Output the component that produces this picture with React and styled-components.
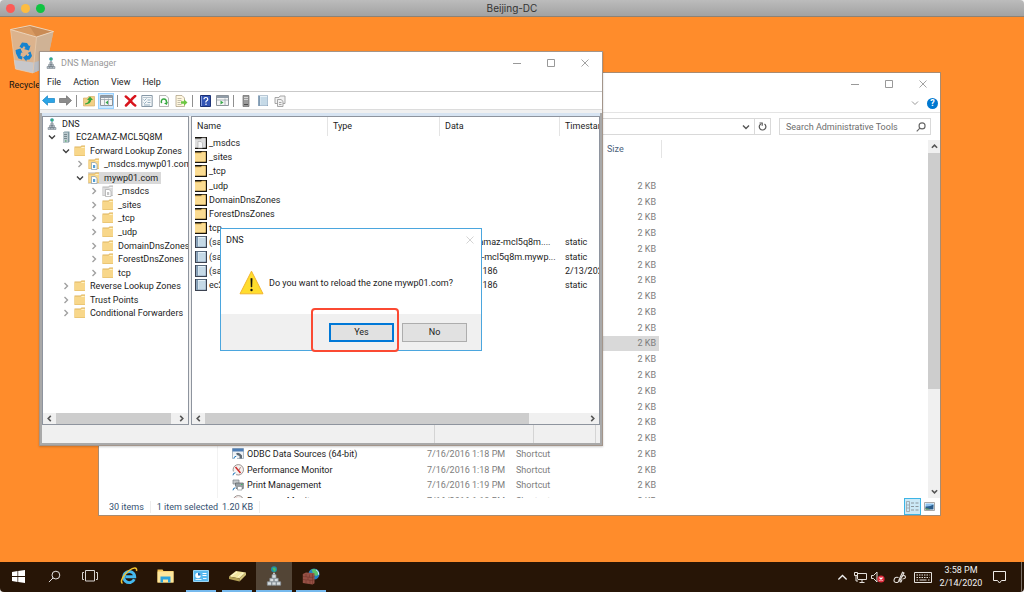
import React from 'react';
import styled, { createGlobalStyle } from 'styled-components';

const GlobalStyle = createGlobalStyle`
  * {
    box-sizing: border-box;
  }
  body {
    margin: 0;
    background: #f4f4f4;
  }
  button, input {
    font: inherit;
    color: inherit;
    padding: 0;
    margin: 0;
    border: 0;
    background: none;
  }
  svg {
    display: block;
    flex: none;
  }
`;

const Screen = styled.div`
  display: flex;
  flex-direction: column;
  height: 100vh;
  overflow: hidden;
  border-radius: 4px;
  font-family: Roboto, "Noto Sans", sans-serif;
  font-size: 9px;
  line-height: 12px;
  color: #1c1c1c;
  white-space: nowrap;
`;

const MacBar = styled.header`
  position: relative;
  display: flex;
  align-items: center;
  justify-content: center;
  height: 17px;
  border-bottom: 1px solid #8d8275;
  background: linear-gradient(#bcbcbc, #a2a2a2);
  font-family: Inter, sans-serif;
  font-size: 10px;
  color: #333;
`;

const Lights = styled.div`
  position: absolute;
  left: 6px;
  top: 4px;
  display: flex;
  gap: 6px;
`;

const Light = styled.button`
  width: 9px;
  height: 9px;
  border-radius: 50%;
  background: ${(props) => props.$color};
`;

const Desktop = styled.main`
  position: relative;
  flex: 1;
  background: #ff8c2b;
`;

const DesktopIcon = styled.div`
  position: absolute;
  left: 9px;
  top: 7px;
  display: flex;
  flex-direction: column;
  gap: 5px;
  color: #111;
`;

const TitleBar = styled.div`
  display: flex;
  align-items: center;
  height: 21px;
  padding-left: 5px;
  color: #999;
`;

const TitleText = styled.span`
  flex: 1;
  padding-left: 4px;
`;

const WindowButton = styled.button`
  display: flex;
  align-items: center;
  justify-content: center;
  width: 34px;
  height: 21px;
  color: #999;
`;

/* ---------- explorer window ---------- */

const ExplorerWindow = styled.section`
  position: absolute;
  left: 98px;
  right: 83px;
  top: 55px;
  bottom: 46px;
  display: flex;
  flex-direction: column;
  border: 1px solid #a98b70;
  background: #fff;
`;

const RibbonRow = styled.div`
  display: flex;
  align-items: center;
  justify-content: flex-end;
  gap: 8px;
  height: 19px;
  padding-right: 2px;
  border-bottom: 1px solid #e4e4e4;
  color: #999;
`;

const HelpButton = styled.button`
  width: 11px;
  height: 11px;
  border-radius: 50%;
  background: #0078d0;
  color: #fff;
  line-height: 11px;
  font-weight: 700;
`;

const AddressRow = styled.div`
  display: flex;
  gap: 8px;
  padding: 5px 9px 5px 120px;
`;

const AddressBox = styled.div`
  display: flex;
  flex: 1;
  height: 17px;
  border: 1px solid #d9d9d9;
`;

const AddressInput = styled.input`
  flex: 1;
  min-width: 0;
`;

const AddressButton = styled.button`
  display: flex;
  align-items: center;
  justify-content: center;
  width: 16px;
  color: #555;
  border-left: ${(props) => (props.$divided ? '1px solid #d9d9d9' : '0')};
`;

const SearchBox = styled.label`
  display: flex;
  align-items: center;
  width: 152px;
  height: 17px;
  padding: 0 4px 0 6px;
  border: 1px solid #d9d9d9;
  color: #666;
`;

const SearchInput = styled.input`
  flex: 1;
  min-width: 0;
  outline: 0;
  &::placeholder {
    color: #6d6d6d;
    opacity: 1;
  }
`;

const ExplorerBody = styled.div`
  display: flex;
  flex: 1;
  min-height: 0;
`;

const NavPane = styled.nav`
  width: 119px;
  border-right: 1px solid #f2f2f2;
`;

const FilePane = styled.div`
  flex: 1;
  overflow: hidden;
`;

const FileTable = styled.table`
  display: block;
  width: 441px;
  color: #7d7d7d;
  thead {
    display: block;
    padding-bottom: 20px;
  }
  tbody {
    display: grid;
    grid-template-rows: repeat(21, 1fr);
    height: 331px;
  }
  tr {
    display: grid;
    grid-template-columns: 209px 89px 91px 52px;
    align-items: center;
  }
  th {
    height: 18px;
    padding: 0;
    text-align: left;
    font-weight: 400;
    line-height: 18px;
    color: #4c607a;
  }
  th:last-child {
    width: 55px;
    border-right: 1px solid #e4e4e4;
  }
  td {
    padding: 0;
  }
  td:last-child {
    padding-right: 3px;
    text-align: right;
  }
`;

const FileRow = styled.tr`
  background: ${(props) => (props.$selected ? '#d9d9d9' : 'none')};
`;

const FileName = styled.div`
  display: flex;
  align-items: center;
  gap: 3px;
  padding-left: 14px;
  color: #1c1c1c;
`;

const ExplorerStatus = styled.footer`
  display: flex;
  align-items: center;
  height: 17px;
  padding: 0 2px 0 10px;
  color: #34506f;
`;

const StatusItem = styled.span`
  display: flex;
  gap: 4px;
  padding-right: 6px;
  margin-right: 6px;
  border-right: 1px solid #ededed;
`;

const ViewButton = styled.button`
  display: flex;
  align-items: center;
  justify-content: center;
  width: 17px;
  height: 17px;
  border: 1px solid ${(props) => (props.$active ? '#3db5e6' : 'transparent')};
  background: ${(props) => (props.$active ? '#cbe8f6' : 'none')};
`;

const Spacer = styled.span`
  flex: 1;
`;

/* ---------- scroll bar ---------- */

const BarBox = styled.div`
  display: flex;
  flex-direction: ${(props) => (props.$vertical ? 'column' : 'row')};
  flex: none;
  width: ${(props) => (props.$vertical ? '12px' : 'auto')};
  height: ${(props) => (props.$vertical ? 'auto' : '11px')};
  background: #f0f0f0;
  color: #555;
`;

const BarArrow = styled.button`
  display: flex;
  align-items: center;
  justify-content: center;
  min-width: 11px;
  flex: 0 0 13px;
`;

const BarTrack = styled.div`
  flex: 1;
`;

const BarThumb = styled.div`
  width: ${(props) => (props.$vertical ? '100%' : props.$size)};
  height: ${(props) => (props.$vertical ? props.$size : '100%')};
  background: #cdcdcd;
`;

/* ---------- dns window ---------- */

const DnsWindow = styled.section`
  position: absolute;
  left: 39px;
  right: 421px;
  top: 34px;
  bottom: 116px;
  display: flex;
  flex-direction: column;
  border: 1px solid #a3958a;
  background: #fff;
  box-shadow: 0 1px 2px rgba(0, 0, 0, 0.2);
`;

const MenuBar = styled.nav`
  display: flex;
  gap: 12px;
  height: 18px;
  padding: 3px 7px;
`;

const ToolBar = styled.div`
  display: flex;
  align-items: center;
  gap: 1px;
  height: 19px;
  border-top: 1px solid #c9c9c9;
  border-bottom: 1px solid #dcdcdc;
`;

const ToolButton = styled.button`
  display: flex;
  align-items: center;
  justify-content: center;
  width: 16px;
  height: 16px;
  background: ${(props) => (props.$active ? '#cce8ff' : 'none')};
  outline: ${(props) => (props.$active ? '1px solid #99d1ff' : '0')};
  outline-offset: -1px;
`;

const ToolDivider = styled.span`
  width: 1px;
  height: 12px;
  margin: 0 3px 0 2px;
  background: #8f8f8f;
`;

const DnsBody = styled.div`
  display: grid;
  grid-template-columns: 147px 1fr;
  gap: 2px;
  flex: 1;
  min-height: 0;
  border: solid #a9a9a9;
  border-width: 0 2px;
  padding-top: 3px;
  background: linear-gradient(#d7e4f2 3px, #f0f0f0 3px);
`;

const BodyEdge = styled.div`
  height: 3px;
  background: #f0f0f0;
`;

const Pane = styled.div`
  display: flex;
  flex-direction: column;
  min-width: 0;
  overflow: hidden;
  border: 1px solid #8e949e;
  background: #fff;
`;

const PaneContent = styled.div`
  flex: 1;
  overflow: hidden;
`;

const Tree = styled.ul`
  display: grid;
  grid-auto-rows: 1fr;
  height: 203px;
  margin: 0;
  padding: 0 0 0 3px;
  list-style: none;
`;

const TreeRow = styled.li`
  display: flex;
  align-items: center;
  gap: 2px;
  padding-left: ${(props) => Math.max(props.$level - 1, 0) * 14}px;
`;

const TreeToggle = styled.button`
  display: flex;
  justify-content: center;
  flex: 0 0 12px;
  color: ${(props) => (props.$open ? '#404040' : '#a0a0a0')};
`;

const TreeLabel = styled.span`
  display: flex;
  align-items: center;
  gap: 4px;
  padding-right: 3px;
  background: ${(props) => (props.$selected ? '#d9d9d9' : 'none')};
`;

const RecordTable = styled.table`
  display: block;
  tr {
    display: grid;
    grid-template-columns: 136px 112px 120px 1fr;
    align-items: center;
  }
  thead {
    display: block;
    height: 19px;
  }
  tbody {
    display: grid;
    grid-auto-rows: 1fr;
    height: 156px;
  }
  th {
    padding: 0 0 0 5px;
    border-right: 1px solid #e4e4e4;
    text-align: left;
    font-weight: 400;
    line-height: 19px;
  }
  td {
    padding: 0 0 0 5px;
  }
  td:first-child {
    padding-left: 3px;
  }
`;

const RecordName = styled.div`
  display: flex;
  align-items: center;
  gap: 2px;
`;

const DnsStatus = styled.footer`
  display: grid;
  grid-template-columns: 1fr 99px 62px 4px;
  height: 20px;
  border: solid #a9a9a9;
  border-width: 0 2px 2px;
  background: #f0f0f0;
  span {
    border-right: 1px solid #d4d4d4;
  }
`;

/* ---------- dialog ---------- */

const Dialog = styled.section`
  position: absolute;
  left: 220px;
  top: 211px;
  width: 262px;
  border: 1px solid #4ba6de;
  background: #fff;
`;

const DialogTitle = styled.div`
  display: flex;
  align-items: center;
  justify-content: space-between;
  height: 22px;
  padding: 0 7px 0 5px;
`;

const DialogClose = styled.button`
  color: #cfcfcf;
`;

const DialogMessage = styled.div`
  display: flex;
  align-items: center;
  gap: 5px;
  height: 63px;
  padding-left: 18px;
`;

const DialogActions = styled.div`
  display: flex;
  align-items: center;
  justify-content: flex-end;
  gap: 8px;
  height: 36px;
  padding-right: 14px;
  background: #f0f0f0;
`;

const DialogButton = styled.button`
  width: 65px;
  height: 19px;
  border: ${(props) => (props.$primary ? '2px solid #0078d7' : '1px solid #adadad')};
  background: #e1e1e1;
`;

const Highlight = styled.span`
  position: absolute;
  left: 90px;
  top: 79px;
  width: 88px;
  height: 44px;
  border: 2px solid #fb4a33;
  border-radius: 4px;
  pointer-events: none;
`;

/* ---------- task bar ---------- */

const TaskBar = styled.footer`
  display: flex;
  align-items: stretch;
  height: 30px;
  background: #271506;
  color: #f2f2f2;
`;

const TaskApps = styled.div`
  display: flex;
  margin-left: 3px;
`;

const TaskButton = styled.button`
  display: flex;
  align-items: center;
  justify-content: center;
  width: ${(props) => (props.$active ? '36px' : '30px')};
  margin: 0 ${(props) => (props.$active ? '1px' : '3px')};
  border-bottom: ${(props) => (props.$running ? '2px solid #76b9ed' : '2px solid transparent')};
  background: ${(props) => (props.$active ? '#534536' : 'none')};
  background-clip: padding-box;
`;

const Tray = styled.div`
  display: flex;
  align-items: center;
  margin-left: auto;
`;

const TrayButton = styled.button`
  display: flex;
  align-items: center;
  justify-content: center;
  width: ${(props) => props.$width || 18}px;
  height: 30px;
`;

const Clock = styled.time`
  width: 52px;
  line-height: 13px;
  text-align: center;
`;

const ShowDesktop = styled.button`
  width: 3px;
  height: 30px;
  margin-left: 10px;
  border-left: 1px solid #7c7168;
`;

/* ---------- icons ---------- */

const chevrons = {
  down: 'M1 2.5 4 5.5 7 2.5',
  up: 'M1 5.5 4 2.5 7 5.5',
  left: 'M5.5 1 2.5 4 5.5 7',
  right: 'M2.5 1 5.5 4 2.5 7',
};

const Chevron = ({ dir, size = 8, weight = 1.4 }) => (
  <svg width={size} height={size} viewBox="0 0 8 8" fill="none" stroke="currentColor" strokeWidth={weight}>
    <path d={chevrons[dir]} />
  </svg>
);

const CrossIcon = () => (
  <svg width="8" height="8" viewBox="0 0 8 8" stroke="currentColor" strokeWidth="0.9">
    <path d="M0.5 0.5 7.5 7.5M7.5 0.5 0.5 7.5" />
  </svg>
);

const FolderIcon = ({ gray, page }) => (
  <svg width="12" height="12" viewBox="0 0 12 12">
    <path d="M.5 1.500h6l1-1h3.500v10.500H.5z" fill={gray ? '#b9b9b9' : '#dfb45f'} />
    <path d="M.5 2.500h6l1-1h3.500v9H.5z" fill={gray ? '#dcdcdc' : '#f8d78a'} />
    <path d="M7.500 2.500h3" stroke={gray ? '#f7f7f7' : '#fff2c8'} />
    {page && (
      <g>
        <path d="M3.500 4.500h3.500l2 1.800v5.200h-5.500z" fill="#fff" stroke={gray ? '#a5a5a5' : '#8199ae'} strokeWidth="0.700" />
        <path d="M5 7h2.200v3H5z" fill={gray ? '#c4c4c4' : '#4f9fd8'} />
      </g>
    )}
  </svg>
);

const ServerIcon = () => (
  <svg width="12" height="12" viewBox="0 0 12 12">
    <path d="M3 1.500 4.500 0.500h5v10l-1.500 1.500h-5z" fill="#7f9aa3" />
    <path d="M3 1.500h5v10.500h-5z" fill="#bac8cd" />
    <path d="M4 3.500h3M4 5.500h3M4 7.500h3" stroke="#66777d" strokeWidth="0.800" />
    <path d="M5 10h1.500" stroke="#3ba455" />
  </svg>
);

const DnsIcon = ({ size = 12, light }) => (
  <svg width={size} height={size} viewBox="0 0 12 12">
    <circle cx="6" cy="2" r="1.800" fill="#1d8ca8" />
    <path d="M5 1.200q1.500-.8 2 .5t-1 1.700z" fill="#46ba65" />
    <path d="M5.500 4h1v1.500h-1z" fill={light ? '#d9d9d9' : '#6f7b84'} />
    <path
      d="M4.800 5.200h2.400v2.200H4.800zM3.500 7.400h2.400v2H3.500zM6.100 7.400h2.400v2H6.100zM2 9.500h2.500v2H2zM4.800 9.500h2.400v2H4.800zM7.500 9.500H10v2H7.500z"
      fill={light ? '#d6dcdf' : '#b3bec6'}
      stroke={light ? '#87929a' : '#66737c'}
      strokeWidth="0.450"
    />
  </svg>
);

/* list icons keep the black mask that the remote session paints round them */
const ListFolderIcon = ({ gray, page }) => (
  <svg width="12" height="12" viewBox="0 0 12 12">
    <path d="M0 0h12v12H0z" fill="#15120d" />
    <path d="M0 1.500h6l1-.8h3.800v10H0z" fill={gray ? '#c9c9c9' : '#efc873'} />
    <path d="M0 2.800h6.200l1-1h3.200v8.500H0z" fill={gray ? '#dedede' : '#fbdc92'} />
    {page && <path d="M3 4.500h3l1.500 1.500v5H3z" fill="#f7f7f7" stroke="#aaa" strokeWidth="0.600" />}
  </svg>
);

const RecordIcon = ({ mask = true }) => (
  <svg width="12" height="12" viewBox="0 0 12 12">
    {mask && <path d="M0 0h12v12H0z" fill="#3c4250" />}
    <path d="M1 .5h10v10.500H1z" fill="#7390ab" />
    <path d="M3 1h7.500v9.500H3z" fill="#e6f1f8" />
    <path d="M3.500 3h6.500M3.500 5h6.500M3.500 7h6.500M3.500 9h6.500" stroke="#96b8cd" strokeWidth="0.800" />
    <path d="M1.200 2h1.200M1.200 4h1.200M1.200 6h1.200M1.200 8h1.200M1.200 10h1.200" stroke="#e4ecf3" strokeWidth="0.600" />
  </svg>
);

const ArrowIcon = ({ color, flip }) => (
  <svg width="13" height="11" viewBox="0 0 13 11">
    <path
      d={flip ? 'M12.500 5.500 7.500.8v2.700H.5v4h7v2.700z' : 'M.5 5.500 5.500.8v2.700h7v4h-7v2.700z'}
      fill={color}
      stroke={flip ? '#6c6c6c' : '#1584c4'}
      strokeWidth="0.700"
    />
  </svg>
);

const UpFolderIcon = () => (
  <svg width="12" height="12" viewBox="0 0 12 12">
    <path d="M.5 3h4l1-1.500h6V11H.5z" fill="#f2cf86" stroke="#d3a75a" strokeWidth="0.600" />
    <path d="M2 8.500q3.500-.5 3.800-3.500H4L7 1.500l3 3.500H8.300q-.5 4-6.300 4.500z" fill="#38a73b" />
  </svg>
);

const ConsoleIcon = ({ right }) => (
  <svg width="13" height="11" viewBox="0 0 13 11">
    <path d="M.5.5h12v10H.5z" fill="#f5f5f5" stroke="#8d949b" />
    <path d="M1 1h11v2H1z" fill="#929da8" />
    <path d={right ? 'M9 3.500v7M1 5h11' : 'M4.500 3.500v7M8.500 3.500v7M1 4.500h11'} stroke="#9ba3ab" strokeWidth="0.800" />
    <path d={right ? 'M4.500 5.500v4L7.500 7.500z' : 'M8 5.500v4L5.500 7.500z'} fill="#38a84a" />
  </svg>
);

const DeleteIcon = () => (
  <svg width="13" height="12" viewBox="0 0 13 12">
    <path d="M1.800 1.500q2 1.500 4.700 4.500 2.500 3 4.700 4.500M11.200 1Q8 3.500 6 6.500q-2 2-4 4" fill="none" stroke="#d8141c" strokeWidth="2.500" strokeLinecap="round" />
  </svg>
);

const PropertiesIcon = () => (
  <svg width="12" height="12" viewBox="0 0 12 12">
    <path d="M.8.5h10.400v11H.8z" fill="#f4f7f9" stroke="#8798a6" />
    <path d="M2 2.500h8" stroke="#a8b7c3" strokeWidth="0.800" />
    <path d="M2.500 4.500l1 1 2-2M2.500 7.500l1 1 2-2M6.500 5h3M6.500 7.500h3M3 10h6" fill="none" stroke="#7e9db0" strokeWidth="0.800" />
  </svg>
);

const RefreshPageIcon = () => (
  <svg width="12" height="12" viewBox="0 0 12 12">
    <path d="M1.500.5h6.500l2.500 2.500v8.500h-9z" fill="#fdfdfd" stroke="#9a9a9a" strokeWidth="0.700" />
    <path d="M3.700 8A2.600 2.600 0 1 1 8.300 7.500" fill="none" stroke="#35a83f" strokeWidth="1.500" />
    <path d="M10 6.800 8.800 10 6 8.200z" fill="#35a83f" />
  </svg>
);

const ExportIcon = () => (
  <svg width="13" height="12" viewBox="0 0 13 12">
    <path d="M1 .5h6l2.500 2.500v8.500H1z" fill="#fff7e0" stroke="#a79a7d" strokeWidth="0.700" />
    <path d="M2.500 3.500h4M2.500 5.500h4M2.500 7.500h3M2.500 9.500h4" stroke="#a9a493" strokeWidth="0.700" />
    <path d="M6 6.200h3V4.200l3.500 3.300L9 10.800V8.800H6z" fill="#6cc644" />
  </svg>
);

const HelpIcon = () => (
  <svg width="11" height="12" viewBox="0 0 11 12">
    <path d="M.5.5h10v11H.5z" fill="#3355b5" stroke="#1d3276" />
    <path d="M1.500 1v10" stroke="#89a0df" />
    <path d="M4 4.200q0-1.700 1.900-1.700T7.800 4.200q0 1-1.100 1.600T6 7.500" fill="none" stroke="#fff" strokeWidth="1.200" />
    <circle cx="6" cy="9.300" r=".8" fill="#fff" />
  </svg>
);

const TowerIcon = () => (
  <svg width="8" height="12" viewBox="0 0 8 12">
    <path d="M1 .5h6v11H1z" fill="#9a9a9a" stroke="#6c6c6c" strokeWidth="0.700" />
    <path d="M2 2.500h4M2 4.500h4" stroke="#e6e6e6" strokeWidth="0.800" />
    <path d="M2 9.500h4" stroke="#4d4d4d" />
  </svg>
);

const PagesIcon = () => (
  <svg width="12" height="12" viewBox="0 0 12 12" fill="#f2f2f2" stroke="#9d9d9d" strokeWidth="0.900">
    <path d="M1 2.500h4l1-1.500h5v7.500H1z" />
    <path d="M3.500 4.500h3.500L9 6.300v5.200H3.500z" />
    <path d="M5 7.500h2.500M5 9.500h2.500" />
  </svg>
);

const WarningIcon = () => (
  <svg width="25" height="25" viewBox="0 0 25 25">
    <path d="M12.500 1.200 24 23.800H1z" fill="#ffdd2e" stroke="#f3b52e" strokeWidth="1" strokeLinejoin="round" />
    <path d="M11.800 8.500h1.400l-.3 8.500h-.8z" fill="#111" stroke="#111" strokeWidth="0.500" />
    <circle cx="12.500" cy="20" r="1.200" fill="#111" />
  </svg>
);

const BinIcon = () => (
  <svg width="46" height="50" viewBox="0 0 46 50">
    <path d="M1.500 5.500 21 1.500l23.500 6-7.500 36-13 5.500L6.500 45z" fill="#dcb38d" />
    <path d="M1.500 5.500 21 1.500l23.500 6-17 5.500z" fill="#c98b55" />
    <path d="M3.500 6 21 2.800l6 9.400z" fill="#d99a61" />
    <path d="M27.500 13l17-5.500L37 43.500 24 49z" fill="#cfb295" />
    <path d="M4.800 36l20 2.500L24 49 6.500 45z" fill="#c7c7ca" />
    <path d="M24.800 38.500l13.300-4L37 43.500 24 49z" fill="#b9bcc2" />
    <path d="M1.500 5.500 27.500 13l17-5.500L21 1.500z" fill="none" stroke="#efd9c2" strokeWidth="0.900" />
    <path d="M1.500 5.500 6.500 45 24 49l3.500-36" fill="none" stroke="#e9cdb0" strokeWidth="0.700" />
    <g fill="#1683cf">
      <path d="M10.500 22.500 13 18.500l5 .5 2 3 1.500-.5-1.500 5-5-1.500 1.500-1-1.500-2-2 2.500z" />
      <path d="M6.500 26l5-1.500 2 4.500-1.500-.5-.5 3.500 2 .5-.5 3-3.500-1-2.500-5z" />
      <path d="M21.500 27.500l1.500 4.500-2.500 3.500-3 .2v1.800l-3.500-4 4-3v1.500l1.500-.2.800-1.300-1.500-1.500z" />
    </g>
  </svg>
);

const SearchIcon = ({ size, weight = 1 }) => (
  <svg width={size} height={size} viewBox="0 0 14 14" fill="none" stroke="currentColor" strokeWidth={weight}>
    <circle cx="8.500" cy="5.500" r="4.200" />
    <path d="M5.500 8.500 1 13" />
  </svg>
);

const ReloadIcon = () => (
  <svg width="9" height="9" viewBox="0 0 9 9" fill="none" stroke="currentColor" strokeWidth="1.200">
    <path d="M6.500 2A3.300 3.300 0 1 1 2.800 1.900" />
    <path d="M1.500 1h2.700v2.700" />
  </svg>
);

const OdbcIcon = () => (
  <svg width="12" height="12" viewBox="0 0 12 12">
    <path d="M.5.500h11v10H.5z" fill="#edf1f5" stroke="#8d9cab" strokeWidth="0.700" />
    <path d="M.5.500h11v3H.5z" fill="#4d7db5" />
    <path d="M4 5.500q3-2 6 2v3H7.500V8L5 7z" fill="#5d6974" />
    <path d="M1 7.500h4v4H1z" fill="#fff" />
    <path d="M1.800 10.800q0-2.500 2.500-2.500" fill="none" stroke="#1872b8" />
  </svg>
);

const GaugeIcon = () => (
  <svg width="12" height="12" viewBox="0 0 12 12">
    <circle cx="6.300" cy="5.800" r="5.200" fill="#f6f1ef" stroke="#8f8886" strokeWidth="0.900" />
    <path d="M3.500 3 8.500 9" stroke="#cc2b2b" strokeWidth="1.500" />
    <path d="M8.500 3.200 7 6" stroke="#8a4d4d" strokeWidth="0.700" />
    <path d="M0 7.500h4v4.500H0z" fill="#fff" />
    <path d="M1 11.300q0-2.500 2.500-2.500" fill="none" stroke="#1872b8" />
  </svg>
);

const PrinterIcon = () => (
  <svg width="12" height="12" viewBox="0 0 12 12">
    <path d="M1 1h6v4H1z" fill="#c5c9cc" stroke="#7d8387" strokeWidth="0.700" />
    <path d="M3.500 4h7.800v5.500H3.500z" fill="#98a0a5" stroke="#5b6266" strokeWidth="0.700" />
    <path d="M5.500 7.500h4.500v3.500H5.500z" fill="#fff" stroke="#7d8387" strokeWidth="0.600" />
    <path d="M9 5.500h1.500" stroke="#44b860" />
    <path d="M0 7.500h4v4.500H0z" fill="#fff" />
    <path d="M1 11.300q0-2.500 2.500-2.500" fill="none" stroke="#1872b8" />
  </svg>
);

const DetailsViewIcon = () => (
  <svg width="13" height="11" viewBox="0 0 13 11" fill="none">
    <path d="M.5.500h3v10h-3zM.5 4h3M.5 7h3" stroke="#9aa0a5" strokeWidth="0.800" />
    <path d="M5 2h3M9.500 2h3M5 5.500h3M9.500 5.500h3M5 9h3M9.500 9h3" stroke="#8b969d" />
  </svg>
);

const ThumbViewIcon = () => (
  <svg width="11" height="9" viewBox="0 0 11 9">
    <path d="M.5.500h10v8H.5z" fill="#fff" stroke="#a9a9a9" />
    <path d="M1.500 1.500h8v3l-8 2z" fill="#8cc2ee" />
    <path d="M1.500 4.500q4 .5 8-2v5h-8z" fill="#2b5d8c" />
    <path d="M1.500 6q3 0 5 1.500h-5z" fill="#56945b" />
  </svg>
);

const WindowsLogo = () => (
  <svg width="13" height="13" viewBox="0 0 13 13" fill="#fff">
    <path d="M0 1.900 5.500 1.100v5H0zM6.200 1 13 0v6.100H6.200zM0 6.900h5.500v5L0 11.100zM6.200 6.900H13V13l-6.800-1z" />
  </svg>
);

const TaskViewIcon = () => (
  <svg width="16" height="12" viewBox="0 0 16 12" fill="none" stroke="#d8d4d0" strokeWidth="1">
    <path d="M3.500.500h9v10.500h-9zM2 2.500H.5v7H2M14 2.500h1.500v7H14" />
  </svg>
);

const IeIcon = () => (
  <svg width="18" height="18" viewBox="0 0 18 18" fill="none">
    <path d="M14.300 12.200A5.500 5.500 0 1 1 14.700 9.700H5.500" stroke="#45b9ee" strokeWidth="2.900" />
    <path d="M2.500 16.500C-.5 14.500 4 7 9 3.500s8.300-3.200 7.500.5" stroke="#f4c22d" strokeWidth="1.500" />
  </svg>
);

const FilesIcon = () => (
  <svg width="17" height="14" viewBox="0 0 17 14">
    <path d="M.5.500h5l1 1.500h10v11.500H.5z" fill="#f4c659" />
    <path d="M.5 2.500h16v11H.5z" fill="#fde69c" />
    <path d="M3.500 13.500v-6h10v6h-2.500v-3h-5v3z" fill="#2aa3df" />
  </svg>
);

const PanelIcon = () => (
  <svg width="16" height="12" viewBox="0 0 16 12">
    <path d="M.5.500h15v11H.5z" fill="#58b9ef" stroke="#9bd6f5" />
    <circle cx="5" cy="5.500" r="2.700" fill="#fff" />
    <path d="M5 5.500V2.800A2.700 2.700 0 0 1 7.700 5.500z" fill="#1d6fb8" />
    <path d="M9.500 3.500h4M9.500 5.500h4" stroke="#fff" />
    <path d="M2.500 9.500h6M10 8.500h3.500" stroke="#e5f5ff" />
  </svg>
);

const DriveIcon = () => (
  <svg width="19" height="12" viewBox="0 0 19 12">
    <path d="M1 6.500 8 1l10 1.500-6.500 6z" fill="#f3e8a3" />
    <path d="M1 6.500l10.500 2v3L1 9z" fill="#b5a257" />
    <path d="M11.500 8.500l6.500-6v2.500l-6.500 6.500z" fill="#d4c47b" />
    <path d="M3 6l6-4M10 7l5-4" stroke="#fffbe0" strokeWidth="0.800" />
  </svg>
);

const FirewallIcon = () => (
  <svg width="18" height="17" viewBox="0 0 18 17">
    <circle cx="12" cy="6" r="5.500" fill="#237fc4" />
    <path d="M9.500 1.500q4-1.500 6 1.500t-1 5l-3-1z" fill="#5bc26b" />
    <path d="M14 1.800q3 1.500 2.700 5" fill="none" stroke="#d5f1ff" />
    <path d="M.8 6 4 4.500l8.500.8v10l-2 1.200L.8 15z" fill="#965044" />
    <path d="M1 8.500l9.500 1 2-1M1 11.500l9.500 1 2-1M4 6v3M7.500 6.500v3M6 9v3M4 12v3.500M8 12v4M10.500 6v10.500" fill="none" stroke="#6f3228" strokeWidth="0.500" />
  </svg>
);

const NetworkIcon = () => (
  <svg width="13" height="11" viewBox="0 0 13 11" fill="none" stroke="#e4e0dc" strokeWidth="1">
    <path d="M3.500 1.500h9v6h-9zM8 7.500v2.500M5.500 10.500h5" />
    <path d="M.5.500h3v3h-3zM2 3.500v5.500h2" fill="#271506" />
  </svg>
);

const MutedIcon = () => (
  <svg width="14" height="12" viewBox="0 0 14 12">
    <path d="M.5 4.500h2L6 1v10L2.500 7.500h-2z" fill="none" stroke="#e4e0dc" />
    <circle cx="10" cy="8" r="3.600" fill="#e02c3c" />
    <path d="M8.500 6.500l3 3M11.500 6.500l-3 3" stroke="#fff" strokeWidth="1.100" />
  </svg>
);

const InkIcon = () => (
  <svg width="13" height="13" viewBox="0 0 13 13" fill="none" stroke="#e4e0dc" strokeWidth="1.100">
    <path d="M5.500 6.500Q2 5.500 1.200 8.300t1.800 3.200 3-2.500L9.500 1.200l1.500.8-4 7.500q-.3 2.300 1.200 1.200L9 8.500" />
    <path d="M8.500 5.500q3-2 3.800 0t-2.800 2.500" />
  </svg>
);

const KeyboardIcon = () => (
  <svg width="18" height="11" viewBox="0 0 18 11" fill="none" stroke="#e4e0dc">
    <path d="M.5.500h17v10H.5z" />
    <path d="M2.500 3h13M2.500 5.500h13" strokeDasharray="1.500 1" strokeWidth="1.200" />
    <path d="M2.500 8h1.500M5.500 8h7M14 8h1.500" />
  </svg>
);

const NoticeIcon = () => (
  <svg width="13" height="13" viewBox="0 0 13 13" fill="none" stroke="#f0ece8">
    <path d="M.5.500h12v9H8.500L6.500 12 4.500 9.500h-4z" />
  </svg>
);

/* ---------- data ---------- */

const tree = [
  { label: 'DNS', level: 0, icon: <DnsIcon /> },
  { label: 'EC2AMAZ-MCL5Q8M', level: 1, open: true, icon: <ServerIcon /> },
  { label: 'Forward Lookup Zones', level: 2, open: true, icon: <FolderIcon /> },
  { label: '_msdcs.mywp01.com', level: 3, icon: <FolderIcon page /> },
  { label: 'mywp01.com', level: 3, open: true, selected: true, icon: <FolderIcon page /> },
  { label: '_msdcs', level: 4, icon: <FolderIcon gray page /> },
  { label: '_sites', level: 4, icon: <FolderIcon /> },
  { label: '_tcp', level: 4, icon: <FolderIcon /> },
  { label: '_udp', level: 4, icon: <FolderIcon /> },
  { label: 'DomainDnsZones', level: 4, icon: <FolderIcon /> },
  { label: 'ForestDnsZones', level: 4, icon: <FolderIcon /> },
  { label: 'tcp', level: 4, icon: <FolderIcon /> },
  { label: 'Reverse Lookup Zones', level: 2, icon: <FolderIcon /> },
  { label: 'Trust Points', level: 2, icon: <FolderIcon /> },
  { label: 'Conditional Forwarders', level: 2, icon: <FolderIcon /> },
];

const records = [
  { name: '_msdcs', icon: <ListFolderIcon gray page /> },
  { name: '_sites', icon: <ListFolderIcon /> },
  { name: '_tcp', icon: <ListFolderIcon /> },
  { name: '_udp', icon: <ListFolderIcon /> },
  { name: 'DomainDnsZones', icon: <ListFolderIcon /> },
  { name: 'ForestDnsZones', icon: <ListFolderIcon /> },
  { name: 'tcp', icon: <ListFolderIcon /> },
  { name: '(same', data: '[37], ec2amaz-mcl5q8m....', time: 'static', icon: <RecordIcon /> },
  { name: '(same', data: 'ec2amaz-mcl5q8m.mywp...', time: 'static', icon: <RecordIcon /> },
  { name: '(same', data: '172.31.0.186', time: '2/13/2020', icon: <RecordIcon /> },
  { name: 'ec2a', data: '172.31.0.186', time: 'static', icon: <RecordIcon /> },
];

const files = [
  ...Array.from({ length: 17 }, (_, i) => ({ size: '2 KB', selected: i === 10 })),
  { name: 'ODBC Data Sources (64-bit)', date: '7/16/2016 1:18 PM', type: 'Shortcut', size: '2 KB', icon: <OdbcIcon /> },
  { name: 'Performance Monitor', date: '7/16/2016 1:18 PM', type: 'Shortcut', size: '2 KB', icon: <GaugeIcon /> },
  { name: 'Print Management', date: '7/16/2016 1:19 PM', type: 'Shortcut', size: '2 KB', icon: <PrinterIcon /> },
  { name: 'Resource Monitor', date: '7/16/2016 1:18 PM', type: 'Shortcut', size: '2 KB', icon: <GaugeIcon /> },
];

const ScrollBar = ({ vertical, size }) => (
  <BarBox $vertical={vertical}>
    <BarArrow aria-label="Scroll back"><Chevron dir={vertical ? 'up' : 'left'} size={7} weight={1.8} /></BarArrow>
    <BarTrack><BarThumb $vertical={vertical} $size={size} /></BarTrack>
    <BarArrow aria-label="Scroll forward"><Chevron dir={vertical ? 'down' : 'right'} size={7} weight={1.8} /></BarArrow>
  </BarBox>
);

const WindowControls = () => (
  <>
    <WindowButton aria-label="Minimize">
      <svg width="8" height="8" viewBox="0 0 8 8" stroke="currentColor"><path d="M0 4.500h8" /></svg>
    </WindowButton>
    <WindowButton aria-label="Maximize">
      <svg width="8" height="8" viewBox="0 0 8 8" fill="none" stroke="currentColor"><path d="M.5.500h7v7h-7z" /></svg>
    </WindowButton>
    <WindowButton aria-label="Close"><CrossIcon /></WindowButton>
  </>
);

const Explorer = () => (
  <ExplorerWindow>
    <TitleBar>
      <TitleText />
      <WindowControls />
    </TitleBar>
    <RibbonRow>
      <Chevron dir="down" weight={1} />
      <HelpButton>?</HelpButton>
    </RibbonRow>
    <AddressRow>
      <AddressBox>
        <AddressInput aria-label="Address" />
        <AddressButton aria-label="Previous locations"><Chevron dir="down" /></AddressButton>
        <AddressButton $divided aria-label="Refresh"><ReloadIcon /></AddressButton>
      </AddressBox>
      <SearchBox>
        <SearchInput placeholder="Search Administrative Tools" aria-label="Search Administrative Tools" />
        <SearchIcon size={10} weight={1.6} />
      </SearchBox>
    </AddressRow>
    <ExplorerBody>
      <NavPane />
      <FilePane>
        <FileTable>
          <thead>
            <tr><th /><th /><th /><th>Size</th></tr>
          </thead>
          <tbody>
            {files.map((file, i) => (
              <FileRow key={i} $selected={file.selected}>
                <td><FileName>{file.icon}{file.name}</FileName></td>
                <td>{file.date}</td>
                <td>{file.type}</td>
                <td>{file.size}</td>
              </FileRow>
            ))}
          </tbody>
        </FileTable>
      </FilePane>
      <ScrollBar vertical size="71%" />
    </ExplorerBody>
    <ExplorerStatus>
      <StatusItem>30 items</StatusItem>
      <StatusItem><span>1 item selected</span><span>1.20 KB</span></StatusItem>
      <Spacer />
      <ViewButton $active aria-label="Details"><DetailsViewIcon /></ViewButton>
      <ViewButton aria-label="Large icons"><ThumbViewIcon /></ViewButton>
    </ExplorerStatus>
  </ExplorerWindow>
);

const DnsManager = () => (
  <DnsWindow>
    <TitleBar>
      <DnsIcon />
      <TitleText>DNS Manager</TitleText>
      <WindowControls />
    </TitleBar>
    <MenuBar>
      <button>File</button>
      <button>Action</button>
      <button>View</button>
      <button>Help</button>
    </MenuBar>
    <ToolBar>
      <ToolButton aria-label="Back"><ArrowIcon color="#2ba4e6" /></ToolButton>
      <ToolButton aria-label="Forward"><ArrowIcon flip color="#8c8c8c" /></ToolButton>
      <ToolDivider />
      <ToolButton aria-label="Up one level"><UpFolderIcon /></ToolButton>
      <ToolButton $active aria-label="Show console tree"><ConsoleIcon /></ToolButton>
      <ToolDivider />
      <ToolButton aria-label="Delete"><DeleteIcon /></ToolButton>
      <ToolButton aria-label="Properties"><PropertiesIcon /></ToolButton>
      <ToolButton aria-label="Refresh"><RefreshPageIcon /></ToolButton>
      <ToolButton aria-label="Export list"><ExportIcon /></ToolButton>
      <ToolDivider />
      <ToolButton aria-label="Help"><HelpIcon /></ToolButton>
      <ToolButton aria-label="Show action pane"><ConsoleIcon right /></ToolButton>
      <ToolDivider />
      <ToolButton aria-label="New server"><TowerIcon /></ToolButton>
      <ToolButton aria-label="New zone"><RecordIcon mask={false} /></ToolButton>
      <ToolButton aria-label="New record"><PagesIcon /></ToolButton>
    </ToolBar>
    <BodyEdge />
    <DnsBody>
      <Pane>
        <PaneContent>
          <Tree>
            {tree.map((node, i) => (
              <TreeRow key={i} $level={node.level}>
                {node.level > 0 && (
                  <TreeToggle $open={node.open} aria-label="Toggle">
                    <Chevron dir={node.open ? 'down' : 'right'} />
                  </TreeToggle>
                )}
                <TreeLabel $selected={node.selected}>{node.icon}{node.label}</TreeLabel>
              </TreeRow>
            ))}
          </Tree>
        </PaneContent>
        <ScrollBar size="97%" />
      </Pane>
      <Pane>
        <PaneContent>
          <RecordTable>
            <thead>
              <tr><th>Name</th><th>Type</th><th>Data</th><th>Timestamp</th></tr>
            </thead>
            <tbody>
              {records.map((record, i) => (
                <tr key={i}>
                  <td><RecordName>{record.icon}{record.name}</RecordName></td>
                  <td />
                  <td>{record.data}</td>
                  <td>{record.time}</td>
                </tr>
              ))}
            </tbody>
          </RecordTable>
        </PaneContent>
        <ScrollBar size="85%" />
      </Pane>
    </DnsBody>
    <DnsStatus><span /><span /><span /></DnsStatus>
  </DnsWindow>
);

const ReloadDialog = () => (
  <Dialog role="dialog" aria-label="DNS">
    <DialogTitle>
      DNS
      <DialogClose aria-label="Close"><CrossIcon /></DialogClose>
    </DialogTitle>
    <DialogMessage>
      <WarningIcon />
      Do you want to reload the zone mywp01.com?
    </DialogMessage>
    <DialogActions>
      <DialogButton $primary>Yes</DialogButton>
      <DialogButton>No</DialogButton>
    </DialogActions>
    <Highlight />
  </Dialog>
);

const App = () => {
  return (
    <>
      <GlobalStyle />
      <Screen>
        <MacBar>
          <Lights>
            <Light $color="#fc5b57" aria-label="Close" />
            <Light $color="#fdbc40" aria-label="Minimize" />
            <Light $color="#0fc441" aria-label="Zoom" />
          </Lights>
          Beijing-DC
        </MacBar>
        <Desktop>
          <DesktopIcon>
            <BinIcon />
            Recycle Bin
          </DesktopIcon>
          <Explorer />
          <DnsManager />
          <ReloadDialog />
        </Desktop>
        <TaskBar>
          <TaskButton aria-label="Start"><WindowsLogo /></TaskButton>
          <TaskButton aria-label="Search"><SearchIcon size={13} /></TaskButton>
          <TaskButton aria-label="Task view"><TaskViewIcon /></TaskButton>
          <TaskApps>
            <TaskButton aria-label="Internet Explorer"><IeIcon /></TaskButton>
            <TaskButton aria-label="File Explorer"><FilesIcon /></TaskButton>
            <TaskButton $running aria-label="Administrative Tools"><PanelIcon /></TaskButton>
            <TaskButton $running aria-label="Disk"><DriveIcon /></TaskButton>
            <TaskButton $running $active aria-label="DNS Manager"><DnsIcon size={20} light /></TaskButton>
            <TaskButton $running aria-label="Windows Firewall"><FirewallIcon /></TaskButton>
          </TaskApps>
          <Tray>
            <TrayButton aria-label="Hidden icons"><Chevron dir="up" size={11} weight={0.9} /></TrayButton>
            <TrayButton aria-label="Network"><NetworkIcon /></TrayButton>
            <TrayButton aria-label="Volume"><MutedIcon /></TrayButton>
            <TrayButton $width={24} aria-label="Ink workspace"><InkIcon /></TrayButton>
            <TrayButton $width={24} aria-label="Touch keyboard"><KeyboardIcon /></TrayButton>
            <Clock>3:58 PM<br />2/14/2020</Clock>
            <TrayButton $width={24} aria-label="Notifications"><NoticeIcon /></TrayButton>
            <ShowDesktop aria-label="Show desktop" />
          </Tray>
        </TaskBar>
      </Screen>
    </>
  );
};

export default App;
